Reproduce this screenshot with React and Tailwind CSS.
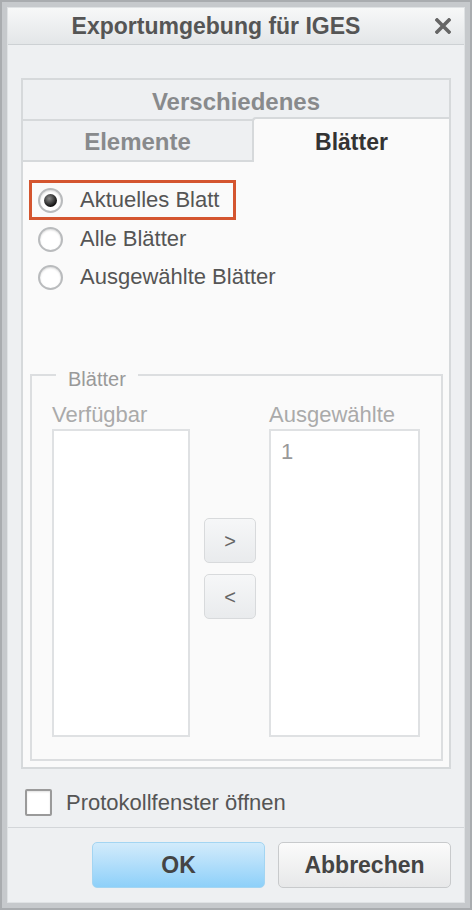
import React from "react";

function Radio({ checked, label, selected }) {
  return (
    <div
      className={
        "flex items-center w-[207px] border-[3px] pl-[6px] " +
        (selected ? "border-[#d4552f] h-[40px]" : "border-transparent h-[38px]")
      }
    >
      <div className="w-[25px] h-[25px] rounded-full border-2 border-[#b9bbbd] bg-white shadow-[inset_0_1px_2px_rgba(0,0,0,0.15)] flex items-center justify-center shrink-0">
        {checked && (
          <div className="w-[13px] h-[13px] rounded-full bg-[radial-gradient(circle_at_40%_35%,#8a8a8a,#111_70%)]" />
        )}
      </div>
      <span className="ml-[17px] text-[22px] leading-none text-[#555] whitespace-nowrap">
        {label}
      </span>
    </div>
  );
}

function ArrowButton({ children }) {
  return (
    <button className="w-[52px] h-[45px] rounded-[5px] border border-[#d8dadc] bg-gradient-to-b from-[#f6f7f8] to-[#e9ebed] text-[20px] text-[#666] flex items-center justify-center">
      {children}
    </button>
  );
}

export default function App() {
  return (
    <div className="w-[472px] h-[910px] bg-[#a9acaf] p-[2px] font-['Liberation_Sans',Arial,sans-serif]">
      <div className="w-full h-full bg-[#c6c9cc] p-[5px]">
        <div className="w-full h-full border border-[#dfe2e4] flex flex-col bg-[#eef0f2]">
          {/* title bar */}
          <div className="h-[37px] shrink-0 flex items-center bg-gradient-to-b from-[#f7f8f8] to-[#e3e6e8] border-b border-[#cdd1d4]">
            <div className="flex-1 text-center font-bold text-[23px] text-[#555] pl-[4px]">
              Exportumgebung für IGES
            </div>
            <div className="w-[44px] flex justify-center pl-[2px]">
              <svg width="16" height="16" viewBox="0 0 16 16">
                <path d="M2 2 L14 14 M14 2 L2 14" stroke="#666" strokeWidth="3.6" strokeLinecap="square" />
              </svg>
            </div>
          </div>

          {/* body */}
          <div className="flex-1 flex flex-col">
            <div className="px-[13px] pt-[33px]">
              <div className="h-[691px] border-2 border-[#d6d9db] flex flex-col">
                <div className="h-[41px] shrink-0 pt-[4px] flex items-center justify-center font-bold text-[24px] text-[#888a8c] border-b-2 border-[#d6d9db]">
                  Verschiedenes
                </div>
                <div className="h-[41px] shrink-0 flex">
                  <div className="flex-1 pt-[3px] flex items-center justify-center font-bold text-[24px] text-[#888a8c] border-b-2 border-[#d6d9db]">
                    Elemente
                  </div>
                  <div className="w-[197px] h-[45px] -mt-[4px] pt-[3px] relative z-10 bg-[#fafafa] border-l-2 border-t-2 border-[#d6d9db] rounded-tl-[4px] flex items-center justify-center font-bold text-[23px] text-[#333]">
                    Blätter
                  </div>
                </div>
                <div className="flex-1 bg-[#fafafa] flex flex-col pt-[18px]">
                  <div className="pl-[6px] flex flex-col">
                    <Radio checked selected label="Aktuelles Blatt" />
                    <Radio label="Alle Blätter" />
                    <Radio label="Ausgewählte Blätter" />
                  </div>

                  <div className="relative mt-[78px] ml-[7px] mr-[6px] h-[387px] border-2 border-[#dcdee0] pt-[24px] pl-[20px] pr-[21px]">
                    <span className="absolute -top-[9px] left-[24px] bg-[#fafafa] px-[12px] text-[20px] leading-[24px] text-[#999]">
                      Blätter
                    </span>
                    <div className="flex">
                      <div className="w-[138px] flex flex-col">
                        <div className="h-[29px] text-[22px] leading-[29px] text-[#aaa]">Verfügbar</div>
                        <div className="h-[308px] bg-white border-2 border-[#dfe1e3]" />
                      </div>
                      <div className="ml-[14px] flex flex-col gap-[11px] pt-[118px]">
                        <ArrowButton>&gt;</ArrowButton>
                        <ArrowButton>&lt;</ArrowButton>
                      </div>
                      <div className="ml-[13px] w-[151px] flex flex-col">
                        <div className="h-[29px] text-[22px] leading-[29px] text-[#aaa]">Ausgewählte</div>
                        <div className="h-[308px] bg-white border-2 border-[#dfe1e3] pl-[10px] pt-[8px] text-[22px] leading-[25px] text-[#999]">
                          1
                        </div>
                      </div>
                    </div>
                  </div>
                </div>
              </div>

              <div className="mt-[19px] h-[28px] flex items-center pl-[4px]">
                <div className="w-[27px] h-[27px] border-2 border-[#9a9a9a] bg-white rounded-[2px] shadow-[inset_0_1px_2px_rgba(0,0,0,0.12)]" />
                <span className="ml-[14px] text-[22px] text-[#555]">Protokollfenster öffnen</span>
              </div>
            </div>

            <div className="mt-[11px] h-px bg-[#d3d6d9]" />

            <div className="flex justify-end gap-[13px] pt-[14px] pr-[13px]">
              <button className="w-[173px] h-[46px] rounded-[5px] border border-[#a3d5f2] bg-gradient-to-b from-[#d2ebfb] to-[#8dd0f9] font-bold text-[23px] text-[#444]">
                OK
              </button>
              <button className="w-[173px] h-[46px] rounded-[5px] border border-[#c8cacc] bg-gradient-to-b from-[#fbfbfb] to-[#e7e8e9] font-bold text-[23px] text-[#444]">
                Abbrechen
              </button>
            </div>
          </div>
        </div>
      </div>
    </div>
  );
}
